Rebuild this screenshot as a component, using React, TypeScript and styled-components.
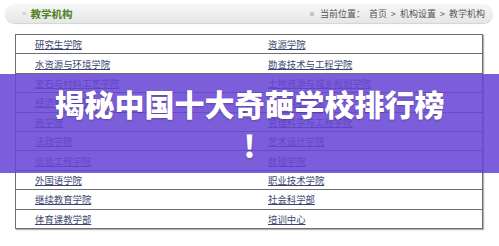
import React from 'react';
import styled, { createGlobalStyle } from 'styled-components';

const GlobalStyle = createGlobalStyle`
  html, body {
    margin: 0;
    padding: 0;
    background: #ffffff;
    font-family: "SimSun", "Noto Sans CJK SC", "Liberation Sans", sans-serif;
  }
`;

const Page = styled.div`
  position: relative;
  width: 499px;
  height: 246px;
  overflow: hidden;
  padding: 4px 6px 0 5px;
  box-sizing: border-box;
`;

const Header = styled.div`
  height: 19px;
  border-radius: 10px;
  background: linear-gradient(#f7f7f7, #e6e6e6);
  box-shadow: 0 1px 1px rgba(0, 0, 0, 0.18);
  display: flex;
  align-items: center;
  justify-content: space-between;
  padding: 0 8px 0 17px;
`;

const Section = styled.div`
  display: flex;
  align-items: center;
  gap: 5px;
`;

const Arrow = styled.span`
  color: #b5b5b5;
  font-size: 8px;
  font-family: "Liberation Sans", sans-serif;
  letter-spacing: -1px;
`;

const SectionTitle = styled.span`
  color: #4d7f1f;
  font-size: 10.5px;
  font-weight: bold;
`;

const Crumbs = styled.div`
  display: flex;
  align-items: center;
  gap: 4px;
  color: #555555;
  font-size: 9px;
`;

const Bullet = styled.span`
  width: 4px;
  height: 4px;
  background: #c4c4c4;
  margin-right: 2px;
`;

const Table = styled.div`
  margin: 11px 10px 0 10px;
  border: 1px solid #6e6e6e;
  border-bottom: none;
  box-shadow: 1px 1px 1px rgba(0, 0, 0, 0.3);
  display: grid;
  grid-template-columns: 1fr 1fr;
`;

const Cell = styled.div`
  height: 18.4px;
  border-bottom: 1px solid #6e6e6e;
  display: flex;
  align-items: center;
  padding-left: 19px;
`;

const Link = styled.a`
  color: #3b4670;
  font-size: 9.4px;
  text-decoration: underline;
  text-underline-offset: 1px;
`;

const Overlay = styled.div`
  position: absolute;
  left: 0;
  right: 0;
  top: 74px;
  height: 99px;
  background: rgba(104, 70, 212, 0.87);
  display: flex;
  align-items: center;
  justify-content: center;
`;

const Title = styled.h1`
  margin: 0;
  color: #ffffff;
  font-family: "Noto Sans CJK SC", sans-serif;
  font-weight: 900;
  font-size: 30px;
  line-height: 42px;
  text-align: center;
  text-shadow: 0 1px 2px rgba(0, 0, 0, 0.25);
`;

const rows: Array<[string, string]> = [
  ['研究生学院', '资源学院'],
  ['水资源与环境学院', '勘查技术与工程学院'],
  ['宝石与材料工艺学院', '土地资源与城乡规划学院'],
  ['经济管理学院', '地球科学学院'],
  ['商学院', '管理科学与工程学院'],
  ['法政学院', '艺术设计学院'],
  ['信息工程学院', '数理学院'],
  ['外国语学院', '职业技术学院'],
  ['继续教育学院', '社会科学部'],
  ['体育课教学部', '培训中心'],
];

const App: React.FC = () => {
  return (
    <Page>
      <GlobalStyle />
      <Header>
        <Section>
          <Arrow>»</Arrow>
          <SectionTitle>教学机构</SectionTitle>
        </Section>
        <Crumbs>
          <Bullet />
          <span>当前位置：</span>
          <span>首页</span>
          <span>&gt;</span>
          <span>机构设置</span>
          <span>&gt;</span>
          <span>教学机构</span>
        </Crumbs>
      </Header>
      <Table>
        {rows.map(([left, right]) => (
          <React.Fragment key={left}>
            <Cell>
              <Link>{left}</Link>
            </Cell>
            <Cell>
              <Link>{right}</Link>
            </Cell>
          </React.Fragment>
        ))}
      </Table>
      <Overlay>
        <Title>
          揭秘中国十大奇葩学校排行榜
          <br />!
        </Title>
      </Overlay>
    </Page>
  );
};

export default App;
